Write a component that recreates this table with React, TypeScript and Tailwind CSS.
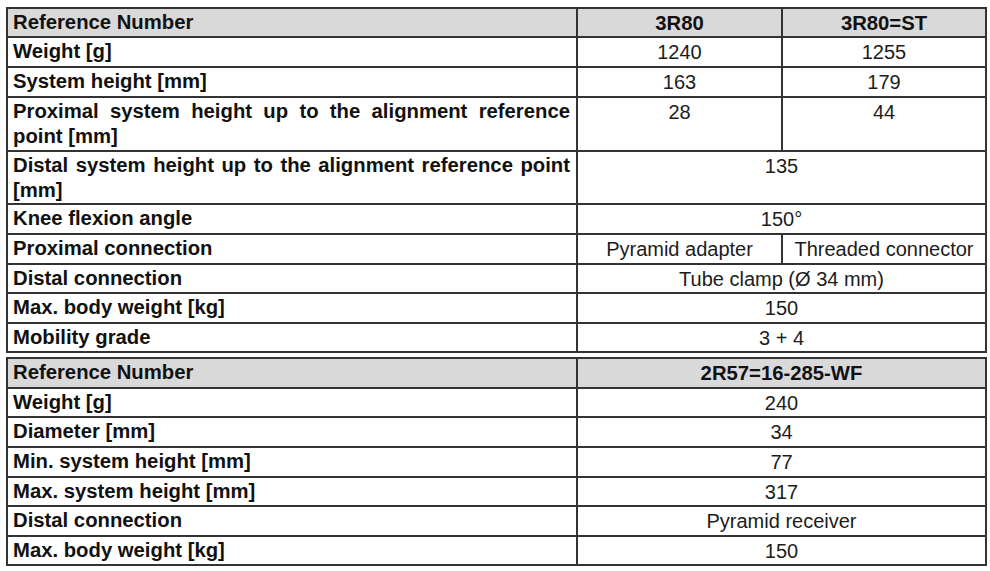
import React from "react";

type Cell = { text: string; span?: number };
type RowDef = { label: string; cells: Cell[]; h: number; header?: boolean };

const top: RowDef[] = [
  { label: "Reference Number", cells: [{ text: "3R80" }, { text: "3R80=ST" }], h: 29, header: true },
  { label: "Weight [g]", cells: [{ text: "1240" }, { text: "1255" }], h: 30 },
  { label: "System height [mm]", cells: [{ text: "163" }, { text: "179" }], h: 30 },
  {
    label: "Proximal system height up to the alignment reference point [mm]",
    cells: [{ text: "28" }, { text: "44" }],
    h: 54,
  },
  {
    label: "Distal system height up to the alignment reference point [mm]",
    cells: [{ text: "135", span: 2 }],
    h: 53,
  },
  { label: "Knee flexion angle", cells: [{ text: "150°", span: 2 }], h: 30 },
  { label: "Proximal connection", cells: [{ text: "Pyramid adapter" }, { text: "Threaded connector" }], h: 30 },
  { label: "Distal connection", cells: [{ text: "Tube clamp (Ø 34 mm)", span: 2 }], h: 29 },
  { label: "Max. body weight [kg]", cells: [{ text: "150", span: 2 }], h: 30 },
  { label: "Mobility grade", cells: [{ text: "3 + 4", span: 2 }], h: 29 },
];

const bottom: RowDef[] = [
  { label: "Reference Number", cells: [{ text: "2R57=16-285-WF", span: 2 }], h: 30, header: true },
  { label: "Weight [g]", cells: [{ text: "240", span: 2 }], h: 29 },
  { label: "Diameter [mm]", cells: [{ text: "34", span: 2 }], h: 30 },
  { label: "Min. system height [mm]", cells: [{ text: "77", span: 2 }], h: 30 },
  { label: "Max. system height [mm]", cells: [{ text: "317", span: 2 }], h: 29 },
  { label: "Distal connection", cells: [{ text: "Pyramid receiver", span: 2 }], h: 30 },
  { label: "Max. body weight [kg]", cells: [{ text: "150", span: 2 }], h: 29 },
];

function Table({ rows }: { rows: RowDef[] }) {
  return (
    <div className="w-[981px] border-l-2 border-t-2 border-[#333333]">
      {rows.map((r, i) => (
        <div
          key={i}
          className={`grid grid-cols-[570px_205px_204px] ${r.header ? "bg-[#d9d9d9]" : "bg-white"}`}
          style={{ height: r.h }}
        >
          <div className="border-r-2 border-b-2 border-[#333333] pl-[5px] pr-[6px] pt-[1px] font-bold text-[20.3px] leading-[25px] text-[#111111] text-justify">
            {r.label}
          </div>
          {r.cells.map((c, j) => (
            <div
              key={j}
              className={`border-r-2 border-b-2 border-[#333333] pt-[1.5px] text-center leading-[25px] whitespace-nowrap ${
                r.header ? "font-bold text-[20.3px] text-[#111111]" : "font-normal text-[20px] text-[#1c1c1c]"
              } ${c.span === 2 ? "col-span-2" : ""}`}
            >
              {c.text}
            </div>
          ))}
        </div>
      ))}
    </div>
  );
}

export default function App() {
  return (
    <div
      className="w-[990px] h-[571px] bg-white pl-[6px] pt-[7px] flex flex-col gap-[4px]"
      style={{ fontFamily: '"Liberation Sans", Arial, Helvetica, sans-serif' }}
    >
      <Table rows={top} />
      <Table rows={bottom} />
    </div>
  );
}
